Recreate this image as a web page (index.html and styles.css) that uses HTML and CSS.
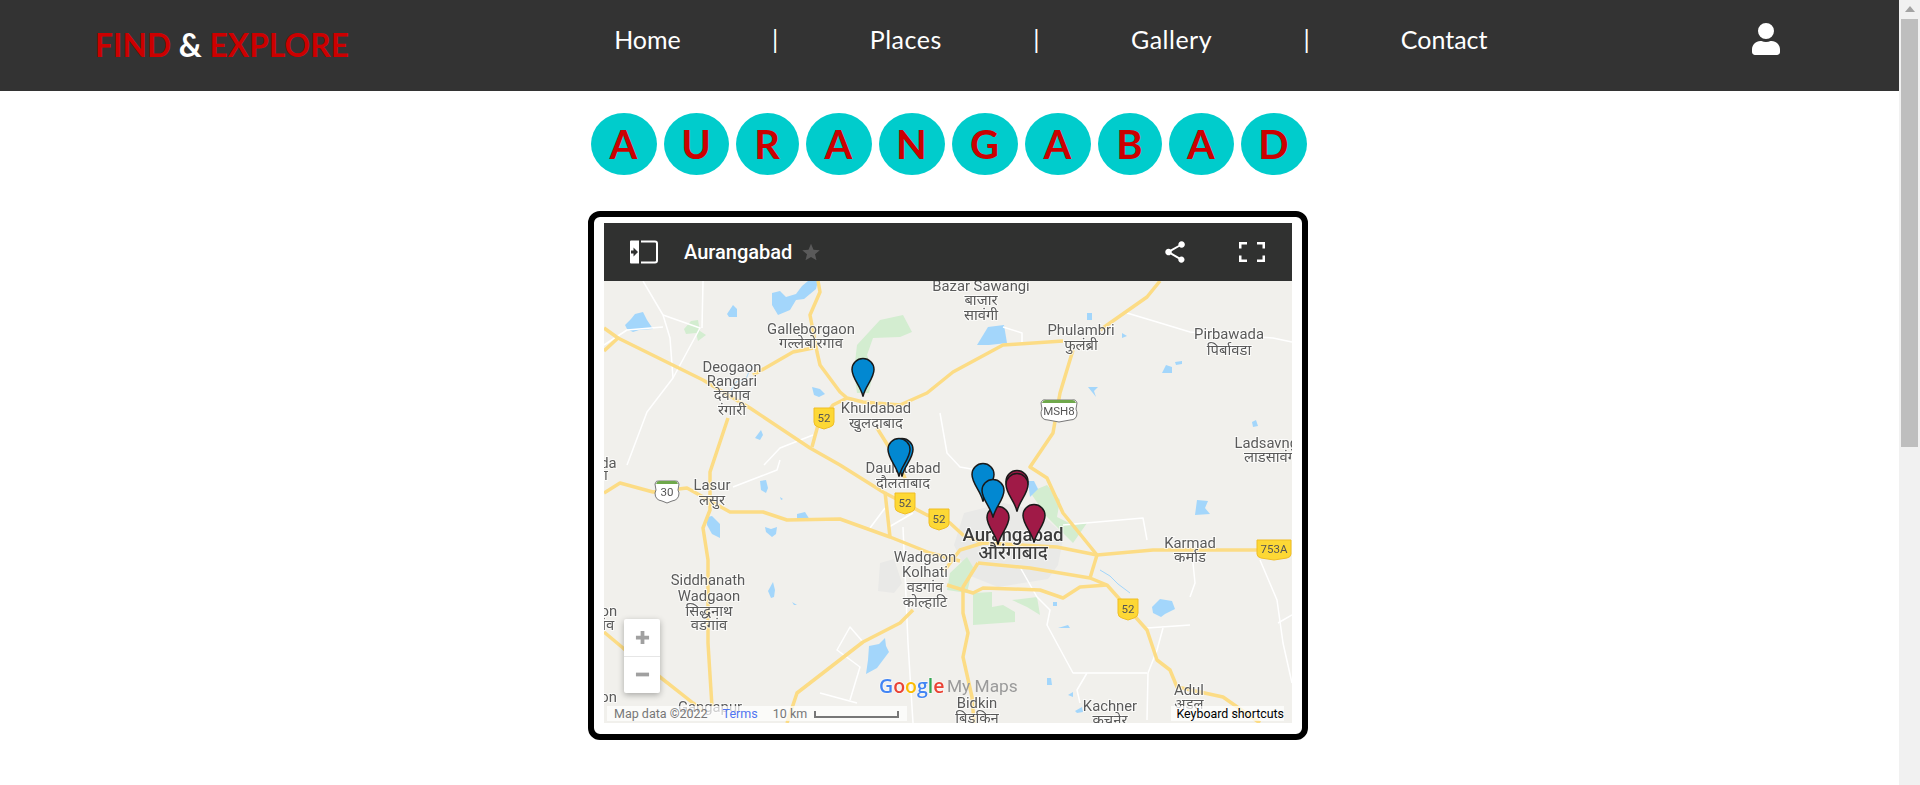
FILE: index.html
```html
<!DOCTYPE html>
<html lang="en">
<head>
    <meta charset="utf-8">
    <title>Find &amp; Explore - Aurangabad</title>
    <link rel="stylesheet" href="styles.css">
</head>

<body>
<div class="page">
    <div class="content">
        <header class="topbar">
            <div class="logo">FIND <span class="logo-amp">&amp;</span> EXPLORE</div>
            <nav class="nav">
                <a class="nav-home" href="#">Home</a>
                <span>|</span>
                <a class="nav-places" href="#">Places</a>
                <span>|</span>
                <a class="nav-gallery" href="#">Gallery</a>
                <span>|</span>
                <a class="nav-contact" href="#">Contact</a>
            </nav>
            <svg class="user-icon" viewBox="0 0 448 512" fill="#fff"><path d="M224 256a128 128 0 1 0 0-256 128 128 0 0 0 0 256zm89.600 32h-16.700c-22.200 10.200-46.900 16-72.900 16s-50.600-5.800-72.900-16h-16.700C60.200 288 0 348.200 0 422.400V464c0 26.500 21.500 48 48 48h352c26.500 0 48-21.500 48-48v-41.600c0-74.200-60.200-134.400-134.400-134.400z"/></svg>
        </header>

        <h1 class="city">
            <span class="w66">A</span>
            <span class="w65">U</span>
            <span class="w63">R</span>
            <span class="w66">A</span>
            <span class="w66">N</span>
            <span class="w66">G</span>
            <span class="w66">A</span>
            <span class="w64">B</span>
            <span class="w65">A</span>
            <span class="w66">D</span>
        </h1>

        <div class="map-frame">
            <div class="map">
                <div class="map-bar">
                    <svg class="map-bar-icon" viewBox="0 0 28 24"><path d="M1 .5h8v23H1a1 1 0 0 1-1-1v-21a1 1 0 0 1 1-1z" fill="#fff"/><path d="M1 10.500h2.500V7.500L8 12l-4.500 4.500v-3H1z" fill="#303130"/><path d="M11 1.500h14a2 2 0 0 1 2 2v17a2 2 0 0 1-2 2H11" fill="none" stroke="#fff" stroke-width="2"/></svg>
                    <span class="map-title">Aurangabad</span>
                    <svg class="map-star" viewBox="0 0 24 24" fill="#5a5a5a"><path d="M12 2l3 7.200 7.500.6-5.700 4.900 1.800 7.300L12 18l-6.600 4 1.800-7.300L1.500 9.800 9 9.200z"/></svg>
                    <span class="map-bar-space"></span>
                    <svg class="map-share" viewBox="0 0 24 24" fill="#fff"><path d="M18 16.100c-.8 0-1.500.3-2 .8l-7.100-4.200c.1-.2.100-.5.100-.7s0-.5-.1-.7L16 7.200c.5.5 1.300.8 2.100.8 1.700 0 3-1.300 3-3s-1.300-3-3-3-3 1.300-3 3c0 .2 0 .5.100.7L8 9.800C7.500 9.300 6.800 9 6 9c-1.700 0-3 1.300-3 3s1.300 3 3 3c.8 0 1.500-.3 2-.8l7.100 4.200c-.1.200-.1.400-.1.600 0 1.600 1.300 2.900 2.900 2.900s2.900-1.300 2.900-2.900-1.200-2.900-2.800-2.900z"/></svg>
                    <svg class="map-full" viewBox="0 0 26 20" fill="none" stroke="#fff" stroke-width="2.500"><path d="M1.250 6.500V1.250H8M18 1.250h6.750V6.500M1.250 13.500v5.250H8M18 18.750h6.750V13.500"/></svg>
                </div>
                <div class="map-canvas">
                    <svg class="map-svg" viewBox="0 0 688 442" width="688" height="442">
                        <defs>
                            <symbol id="pin" viewBox="0 0 24 40" overflow="visible">
                                <path d="M12 39C10 29 1 21 1 12a11 11 0 0 1 22 0c0 9-9 17-11 27z"/>
                            </symbol>
                            <g id="shield52">
                                <path class="shield-y" d="M-10-10h20v14q0 4-4 5l-6 2-6-2q-4-1-4-5z"/>
                                <text class="shield-t" y="4">52</text>
                            </g>
                        </defs>

                        <rect width="688" height="442" fill="#f1f0ec"/>

                        <!-- city area and parks -->
                        <path class="city-area" d="M360 232l40-10 34 8 26 24-6 30-10 14-50 8-30-12-14-30z"/>
                        <path class="city-area" d="M276 282l14-4 8 24-8 10-16-2z"/>
                        <path class="park" d="M253 64l23-25 23-5 9 17-12 5-27 1-6 17 6 17-4 21h-12l-3-22z"/>
                        <path class="park" d="M426 211l17-7 13 15-3 17 16 8 14-2-14 20-26-26z"/>
                        <path class="park" d="M346 292l17-16 6 10-6 26-20-3z"/>
                        <path class="park" d="M369 312l19-1v15l11-2 12 7v10l-42 3z"/>
                        <path class="park" d="M408 319l25-3 3 18-13-8z"/>
                        <path class="park" d="M87 40l7-1 2 11 6 4-8 6-2-8-10 1-2-5z"/>

                        <!-- water -->
                        <path class="water" d="M168 12l8-2 6 6 10-3 6-8 6-5h10l-2 8-12 10-8 1-6 10-12 5-6-10z"/>
                        <path class="water" d="M21 44l6-6 4-5 8-2 4 8 6 9-14 1-6 2-6-3z"/>
                        <path class="water" d="M123 33l6-9 4 4v8l-8 0z"/>
                        <path class="water" d="M208 106l8 2 5 5-6 3-5-2z"/>
                        <path class="water" d="M151 157l6-8 2 5-3 5z"/>
                        <path class="water" d="M373 64l11-18 16-2 3 18-18 2z"/>
                        <path class="water" d="M483 32h5v7h-5z"/>
                        <path class="water" d="M518 52l5 3-5 2z"/>
                        <path class="water" d="M558 92l4-8 6 2v6z"/>
                        <path class="water" d="M571 81l7-1v3l-6 1z"/>
                        <path class="water" d="M484 106l10 0-4 4 2 6-4-5z"/>
                        <path class="water" d="M593 219l11 1-3 7 5 6-15 1z"/>
                        <path class="water" d="M648 141l4-2 2 6-5 1z"/>
                        <path class="water" d="M103 236l5-1 8 8v14l-8-4-5-9z"/>
                        <path class="water" d="M156 200l6-1 2 8-2 5-5-3z"/>
                        <path class="water" d="M161 246l6 2 6-2-1 7-4 3-6-5z"/>
                        <path class="water" d="M193 233l8-2 5 8-13 0z"/>
                        <path class="water" d="M176 216l3 2-2 1z"/>
                        <path class="water" d="M164 310l5-9 2 8-1 7-3 1z"/>
                        <path class="water" d="M188 321l5 3-3 0z"/>
                        <path class="water" d="M265 365l10-2 6-6 1 8 3 6-6 8-6 8-11 6 2-14z"/>
                        <path class="water" d="M548 326l8-8 12 2 3 8-10 5-4 3-8-4z"/>
                        <path class="water" d="M424 200l6 0 4 8-8 8z"/>
                        <path class="water" d="M449 321h4v4h-4z"/>
                        <path class="water" d="M454 347l10-3 2 3-8 0z"/>
                        <path class="water" d="M443 397l4 0 1 7-5 0z"/>
                        <path class="water" d="M464 414l5-3v5z"/>
                        <path class="water" d="M471 430l7-4 1 5-6 1z"/>
                        <path class="river" d="M496 289l10 6 8 8 12 9"/>
                        <path class="river" d="M123 116l6-10 3-5 10-3 4-10 4-4"/>

                        <!-- minor roads -->
                        <g class="minor">
                            <path d="M39 0L59 34 66 57 69 97 43 131 23 184"/>
                            <path d="M59 34L96 47 69 97"/>
                            <path d="M99 0L98 47"/>
                            <path d="M0 64L23 49 59 46"/>
                            <path d="M209 154L176 167 160 184"/>
                            <path d="M176 179L173 189 129 206"/>
                            <path d="M259 361L246 346 233 369 256 386 246 419"/>
                            <path d="M216 412L253 422"/>
                            <path d="M285 246L309 232"/>
                            <path d="M299 246L304 362 309 442"/>
                            <path d="M266 247L281 227"/>
                            <path d="M523 32L553 41 586 51 669 57 688 61"/>
                            <path d="M399 46L418 52 418 61"/>
                            <path d="M336 132L343 172 356 186 373 189"/>
                            <path d="M459 244L539 237 543 259"/>
                            <path d="M589 282L591 302 586 316"/>
                            <path d="M543 347L586 344"/>
                            <path d="M559 347L553 369 544 392 543 439"/>
                            <path d="M416 286L433 316 446 329 443 344 469 392 483 392 543 392"/>
                            <path d="M483 392L473 409 476 422"/>
                            <path d="M656 279L673 319 679 362 688 402"/>
                            <path d="M674 342L688 334"/>
                        </g>

                        <!-- main roads -->
                        <g class="road">
                            <path d="M0 47L14 57 99 99 119 111 146 127 206 167 236 184 279 211 323 234 346 242 359 254 379 262"/>
                            <path d="M0 70L14 57"/>
                            <path d="M149 94L189 71 209 67"/>
                            <path d="M214 0L216 11 206 34 213 71 216 84 236 111 243 117 259 121 296 124 323 112 349 91 399 64 459 60"/>
                            <path d="M469 69L456 112 449 152 426 186 443 197 459 232 493 274"/>
                            <path d="M496 49L543 16 556 0"/>
                            <path d="M243 117L229 124 214 144 208 166"/>
                            <path d="M124 137L106 191 106 229 99 247 104 279 104 362 108 426"/>
                            <path d="M273 147L296 184 302 200"/>
                            <path d="M0 212L16 202 49 211 83 207 126 231 159 231 183 239 236 238 286 256 326 272 356 280"/>
                            <path d="M281 211L286 256"/>
                            <path d="M309 329L296 342 259 361 193 412 183 442"/>
                            <path d="M0 351L19 367 56 396 89 422 100 430"/>
                            <path d="M340 290L356 269 379 262 453 266 493 274 549 269 646 269 669 269"/>
                            <path d="M493 274L486 297"/>
                            <path d="M374 282L426 287 486 297 503 304 543 349 553 379 566 389 573 406 619 416 656 442"/>
                            <path d="M374 282L359 306 359 332 364 352 359 376 368 416 370 442"/>
                            <path d="M343 304L369 312 379 307 436 309 459 317 476 306 503 304"/>
                        </g>

                        <!-- road shields -->
                        <use href="#shield52" x="220" y="137"/>
                        <use href="#shield52" x="301" y="222"/>
                        <use href="#shield52" x="335" y="238"/>
                        <use href="#shield52" x="524" y="328"/>
                        <g transform="translate(670 268)">
                            <path class="shield-y" d="M-17-9h34v14q0 3-4 4l-13 2-13-2q-4-1-4-4z"/>
                            <text class="shield-t" y="4">753A</text>
                        </g>
                        <g transform="translate(455 129)">
                            <path class="shield-w" d="M-18-7q1-4 5-3h26q4-1 5 3l-1 6q1 3 1 4 0 7-7 7l-11 2-11-2q-7 0-7-7 0-1 1-4z"/>
                            <path d="M-17-7q1-3 4-3h26q3 0 4 3z" fill="#6fa84b"/>
                            <text class="shield-t" y="5">MSH8</text>
                        </g>
                        <g transform="translate(63 210)">
                            <path class="shield-w" d="M-12-7q1-4 4-3h16q3-1 4 3l-1 6 1 3q0 7-7 8l-5 2-5-2q-7-1-7-8l1-3z"/>
                            <path d="M-11-7q1-3 3-3h16q2 0 3 3z" fill="#6fa84b"/>
                            <text class="shield-t" y="5">30</text>
                        </g>

                        <!-- labels -->
                        <g class="labels">
                            <text x="207" y="53">Galleborgaon</text>
                            <text x="207" y="67">गल्लेबोरगाव</text>
                            <text x="128" y="91">Deogaon</text>
                            <text x="128" y="105">Rangari</text>
                            <text x="128" y="119">देवगाव</text>
                            <text x="128" y="134">रंगारी</text>
                            <text x="272" y="132">Khuldabad</text>
                            <text x="272" y="147">खुलदाबाद</text>
                            <text x="377" y="10">Bazar Sawangi</text>
                            <text x="377" y="24">बाजार</text>
                            <text x="377" y="39">सावंगी</text>
                            <text x="477" y="54">Phulambri</text>
                            <text x="477" y="69">फुलंब्री</text>
                            <text x="625" y="58">Pirbawada</text>
                            <text x="625" y="74">पिर्बावडा</text>
                            <text x="664" y="167">Ladsavngi</text>
                            <text x="668" y="181">लाडसावंगी</text>
                            <text x="108" y="209">Lasur</text>
                            <text x="108" y="224">लसुर</text>
                            <text x="299" y="192">Daulatabad</text>
                            <text x="299" y="207">दौलताबाद</text>
                            <text x="104" y="304">Siddhanath</text>
                            <text x="105" y="320">Wadgaon</text>
                            <text x="105" y="335">सिद्धनाथ</text>
                            <text x="105" y="349">वडगांव</text>
                            <text x="321" y="281">Wadgaon</text>
                            <text x="321" y="296">Kolhati</text>
                            <text x="321" y="311">वडगांव</text>
                            <text x="321" y="326">कोल्हाटि</text>
                            <text x="586" y="267">Karmad</text>
                            <text x="586" y="281">कर्माड</text>
                            <text x="373" y="427">Bidkin</text>
                            <text x="373" y="442">बिडकिन</text>
                            <text x="506" y="430">Kachner</text>
                            <text x="506" y="444">कचनेर</text>
                            <text x="585" y="414">Adul</text>
                            <text x="585" y="428">अडल</text>
                            <text x="106" y="431">Gangapur</text>
                            <text x="-6" y="187">Wada</text>
                            <text x="-8" y="199">वाडा</text>
                            <text x="-4" y="335">Phon</text>
                            <text x="-8" y="349">वडगांव</text>
                            <text x="0" y="421">Kon</text>
                        </g>
                        <g class="labels labels-big">
                            <text x="409" y="260">Aurangabad</text>
                            <text x="409" y="278">औरंगाबाद</text>
                        </g>

                        <!-- markers -->
                        <use class="pin-blue" href="#pin" x="247" y="76" width="24" height="41"/>
                        <use class="pin-blue" href="#pin" x="286" y="156" width="24" height="41"/>
                        <use class="pin-blue" href="#pin" x="283" y="156" width="24" height="41"/>
                        <use class="pin-red" href="#pin" x="382" y="224" width="24" height="41"/>
                        <use class="pin-blue" href="#pin" x="367" y="181" width="24" height="41"/>
                        <use class="pin-blue" href="#pin" x="377" y="197" width="24" height="41"/>
                        <use class="pin-red" href="#pin" x="401" y="188" width="24" height="41"/>
                        <use class="pin-red" href="#pin" x="401" y="191" width="24" height="41"/>
                        <use class="pin-red" href="#pin" x="418" y="222" width="24" height="41"/>

                        <!-- google mark -->
                        <text class="google" x="275" y="412"><tspan fill="#4285f4">G</tspan><tspan fill="#ea4335">o</tspan><tspan fill="#fbbc05">o</tspan><tspan fill="#4285f4">g</tspan><tspan fill="#34a853">l</tspan><tspan fill="#ea4335">e</tspan></text>
                        <text class="mymaps" x="343" y="411">My Maps</text>
                    </svg>

                    <div class="zoom-ctrl">
                        <span class="zoom-btn">
                            <svg viewBox="0 0 16 16" fill="#a0a0a0"><path d="M6 1h4v5h5v4h-5v5H6v-5H1V6h5z"/></svg>
                        </span>
                        <span class="zoom-btn">
                            <svg viewBox="0 0 16 16" fill="#a0a0a0"><path d="M1 6h14v4H1z"/></svg>
                        </span>
                    </div>

                    <div class="attrib">
                        <span>Map data ©2022</span>
                        <a href="#">Terms</a>
                        <span>10 km</span>
                        <i class="scale"></i>
                    </div>
                    <div class="shortcuts">Keyboard shortcuts</div>
                </div>
            </div>
        </div>
    </div>

    <div class="scrollbar">
        <i class="scroll-arrow"></i>
        <i class="scroll-thumb"></i>
    </div>
</div>
</body>
</html>
```

FILE: styles.css
```css
* {
    box-sizing: border-box;
}

body {
    margin: 0;
    padding: 0;
    font-family: "Lato", "Noto Sans", sans-serif;
    background-color: #fff;
    overflow: hidden;
}

.page {
    display: flex;
    height: 785px;
}

.content {
    flex: 1;
    min-width: 0;
}

/* top bar */

.topbar {
    display: flex;
    height: 91px;
    padding-left: 95px;
    background-color: #333;
    color: #fff;
}

.logo {
    width: 519px;
    padding-top: 25px;
    font-size: 31.800px;
    font-weight: 700;
    line-height: 40px;
    color: #c00;
    white-space: nowrap;
}

.logo-amp {
    color: #fff;
}

.nav {
    display: flex;
    gap: 91px;
    padding-top: 23px;
    font-size: 25px;
    line-height: 32px;
}

.nav a {
    color: #fff;
    text-align: center;
    text-decoration: none;
    white-space: nowrap;
}

.nav-home { width: 67px; }
.nav-places { width: 73px; letter-spacing: .5px; }
.nav-gallery { width: 82px; letter-spacing: .5px; }
.nav-contact { width: 86px; }

.user-icon {
    width: 28px;
    height: 32px;
    margin: 23px 0 0 265px;
}

/* city name */

.city {
    display: flex;
    justify-content: center;
    gap: 7px;
    margin: 22px 0 0;
    padding-right: 2px;
    font-size: 40px;
    font-weight: 700;
    line-height: 62px;
    color: #c00;
}

.city span {
    height: 62px;
    border-radius: 50%;
    background-color: #00cccc;
    text-align: center;
}

.w63 { width: 63px; }
.w64 { width: 64px; }
.w65 { width: 65px; }
.w66 { width: 66px; }

/* map */

.map-frame {
    width: 720px;
    height: 529px;
    margin: 36px 0 0 588px;
    padding: 6px 10px 11px;
    border: 6px solid #000;
    border-radius: 12px;
}

.map {
    width: 688px;
    height: 500px;
}

.map-bar {
    display: flex;
    align-items: center;
    height: 58px;
    background-color: #303130;
    color: #fff;
}

.map-bar-icon {
    width: 28px;
    height: 24px;
    margin-left: 26px;
}

.map-title {
    margin-left: 26px;
    font-family: "Roboto", sans-serif;
    font-size: 20px;
    font-weight: 500;
}

.map-star {
    width: 20px;
    height: 20px;
    margin-left: 9px;
}

.map-bar-space {
    flex: 1;
}

.map-share {
    width: 26px;
    height: 26px;
}

.map-full {
    width: 26px;
    height: 20px;
    margin: 0 27px 0 51px;
}

.map-canvas {
    position: relative;
    height: 442px;
    overflow: hidden;
    font-family: "Roboto", sans-serif;
}

.map-svg {
    display: block;
    filter: blur(.3px);
}

.city-area {
    fill: #e9e9e7;
}

.park {
    fill: #d3edd0;
}

.water {
    fill: #a3d6fb;
}

.river {
    fill: none;
    stroke: #a3d6fb;
    stroke-width: 1;
}

.minor path {
    fill: none;
    stroke: #fff;
    stroke-width: 1.500;
    stroke-linejoin: round;
}

.road path {
    fill: none;
    stroke: #fcdc85;
    stroke-width: 3.500;
    stroke-linejoin: round;
}

.shield-y {
    fill: #fdd835;
    stroke: #f0bd25;
    stroke-width: 1;
}

.shield-w {
    fill: #fff;
    stroke: #777;
    stroke-width: 1;
}

.shield-t {
    font-size: 11.500px;
    fill: #555;
    text-anchor: middle;
}

.labels text {
    font-size: 14.800px;
    fill: #5a5a5a;
    stroke: #fff;
    stroke-width: 2px;
    stroke-opacity: .7;
    paint-order: stroke;
    text-anchor: middle;
    font-family: "Roboto", "Noto Sans", sans-serif;
}

.labels-big text {
    font-size: 18.700px;
    font-weight: 500;
    fill: #3c3c3c;
}

.pin-blue {
    fill: #0288d1;
    stroke: #1a1a1a;
    stroke-width: 1.500;
}

.pin-red {
    fill: #a01a47;
    stroke: #1a1a1a;
    stroke-width: 1.500;
}

.google {
    font-family: "Open Sans", sans-serif;
    font-size: 19.500px;
    font-weight: 600;
    stroke: #fff;
    stroke-width: 1.500px;
    stroke-opacity: .6;
    paint-order: stroke;
}

.mymaps {
    font-family: "Roboto", sans-serif;
    font-size: 17.300px;
    fill: #9a9a9a;
}

/* map controls */

.zoom-ctrl {
    position: absolute;
    left: 20px;
    top: 338px;
    display: flex;
    flex-direction: column;
    width: 36px;
    height: 74px;
    border-radius: 2px;
    background-color: #fff;
    box-shadow: 0 2px 6px rgba(0, 0, 0, .3);
}

.zoom-btn {
    display: flex;
    flex: 1;
    align-items: center;
    justify-content: center;
}

.zoom-btn + .zoom-btn {
    border-top: 1px solid #e6e6e6;
}

.zoom-btn svg {
    width: 15px;
    height: 15px;
}

.attrib {
    position: absolute;
    left: 3px;
    top: 425px;
    display: flex;
    align-items: center;
    width: 300px;
    height: 15px;
    padding-left: 7px;
    background-color: rgba(255, 255, 255, .7);
    font-size: 12.500px;
    color: #777;
}

.attrib a {
    margin-left: 15px;
    color: #4f74f0;
    text-decoration: none;
}

.attrib span + a + span {
    margin-left: 15px;
}

.scale {
    width: 85px;
    height: 7px;
    margin: 1px 0 0 7px;
    border: 2px solid #777;
    border-top: none;
}

.shortcuts {
    position: absolute;
    right: 8px;
    top: 425px;
    padding-left: 6px;
    height: 15px;
    background-color: rgba(255, 255, 255, .7);
    font-size: 12.400px;
    line-height: 16px;
    color: #000;
}

/* scrollbar, drawn by hand */

.scrollbar {
    display: flex;
    flex-direction: column;
    align-items: center;
    width: 21px;
    padding-top: 6px;
    background-color: #f1f1f1;
}

.scroll-arrow {
    display: block;
    flex: none;
    width: 10px;
    height: 6px;
    border-left: 5px solid transparent;
    border-right: 5px solid transparent;
    border-bottom: 6px solid #a3a3a3;
}

.scroll-thumb {
    display: block;
    flex: none;
    width: 17px;
    height: 428px;
    margin-top: 7px;
    background-color: #bebebe;
}
```
